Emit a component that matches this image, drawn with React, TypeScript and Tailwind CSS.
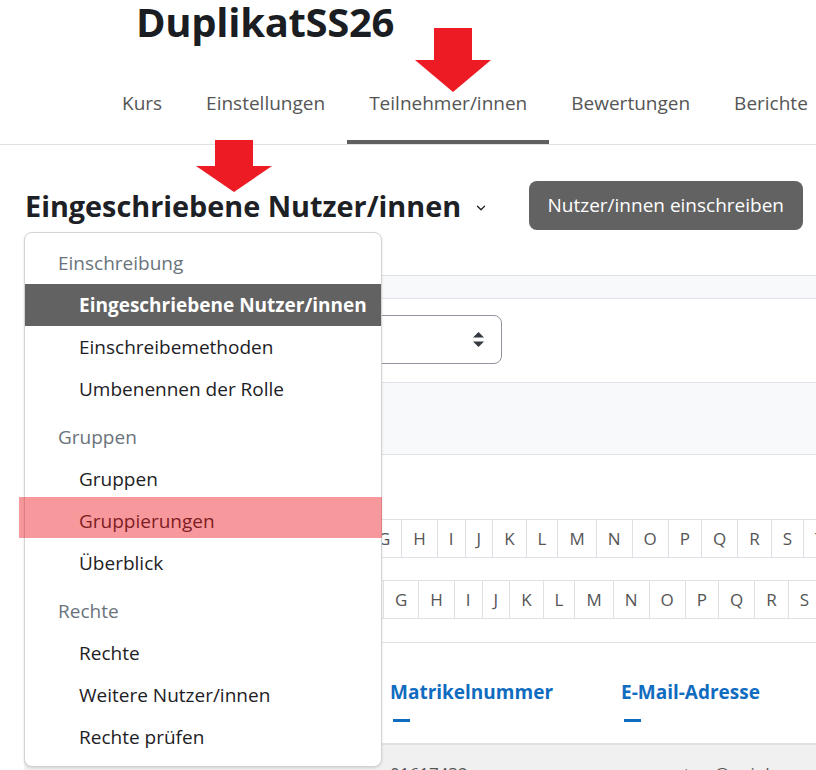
import { ChevronDown } from 'lucide-react'

const TABS = ['Kurs', 'Einstellungen', 'Teilnehmer/innen', 'Bewertungen', 'Berichte']
const LETTERS = 'ABCDEFGHIJKLMNOPQRSTUVWXYZ'.split('')

type MenuEntry = { kind: 'header' | 'item'; label: string; active?: boolean }

const MENU: MenuEntry[] = [
  { kind: 'header', label: 'Einschreibung' },
  { kind: 'item', label: 'Eingeschriebene Nutzer/innen', active: true },
  { kind: 'item', label: 'Einschreibemethoden' },
  { kind: 'item', label: 'Umbenennen der Rolle' },
  { kind: 'header', label: 'Gruppen' },
  { kind: 'item', label: 'Gruppen' },
  { kind: 'item', label: 'Gruppierungen' },
  { kind: 'item', label: 'Überblick' },
  { kind: 'header', label: 'Rechte' },
  { kind: 'item', label: 'Rechte' },
  { kind: 'item', label: 'Weitere Nutzer/innen' },
  { kind: 'item', label: 'Rechte prüfen' },
]

function InitialsBar({ offset }: { offset: string }) {
  return (
    <div className={`flex h-[39px] border-y border-[#dee2e6] ${offset}`}>
      {['Alle', ...LETTERS].map((l) => (
        <span
          key={l}
          className="shrink-0 flex items-center px-[11px] border-l border-[#dee2e6] text-[17px] text-[#555]"
        >
          {l}
        </span>
      ))}
    </div>
  )
}

function SortMark() {
  return <span className="block ml-[3px] mt-[13px] w-[17px] h-[3px] bg-[#0f6cbf]" />
}

export default function App() {
  return (
    <div className="relative w-[816px] h-[770px] overflow-hidden bg-white text-[#1d2125] font-['Open_Sans','Noto_Sans',sans-serif]">
      {/* course header */}
      <div className="h-[62px] pl-[136px]">
        <h1 className="text-[40px] leading-[44px] font-bold tracking-[-0.3px] text-[#1a1d21]">DuplikatSS26</h1>
      </div>
      <nav className="flex h-[83px] pl-[100px] border-b border-[#dee2e6]">
        {TABS.map((t) => (
          <span
            key={t}
            className={`shrink-0 flex items-center px-[22px] pt-[4px] text-[19px] text-[#555] whitespace-nowrap border-b-[4px] ${
              t === 'Teilnehmer/innen' ? 'border-[#5f5f5f]' : 'border-transparent'
            }`}
          >
            {t}
          </span>
        ))}
      </nav>

      {/* page heading */}
      <div className="flex items-center h-[49px] mt-[36px] pl-[25px] pr-[13px]">
        <h2 className="text-[28.8px] font-bold whitespace-nowrap">Eingeschriebene Nutzer/innen</h2>
        <ChevronDown size={14} strokeWidth={2.2} className="ml-[13px] mt-[4px]" />
        <button className="ml-auto h-[49px] px-[19px] rounded-[8px] bg-[#626262] text-white text-[19px] whitespace-nowrap">
          Nutzer/innen einschreiben
        </button>
      </div>

      {/* filters */}
      <div className="pl-6">
        <div className="mt-[45px] h-[24px] border-y border-[#dee2e6] bg-[#f8f9fa]" />
        <div className="mt-[16px] ml-[254px] w-[224px] h-[49px] flex items-center justify-end pr-[17px] border border-[#8f959e] rounded-[8px]">
          <svg width="11" height="15" viewBox="0 0 11 15" fill="#343a40">
            <polygon points="5.5,0 11,5.5 0,5.5" />
            <polygon points="0,9.5 11,9.5 5.5,15" />
          </svg>
        </div>
        <div className="mt-[18px] h-[73px] border-y border-[#dee2e6] bg-[#f8f9fa]" />

        <div className="mt-[64px]">
          <InitialsBar offset="ml-[89px]" />
        </div>
        <div className="mt-[22px]">
          <InitialsBar offset="ml-[106px]" />
        </div>

        {/* participants table */}
        <div className="mt-[23px] flex h-[103px] border-t border-b-2 border-[#dee2e6]">
          <div className="w-[358px] shrink-0" />
          <div className="w-[231px] shrink-0 px-2 pt-[35px]">
            <span className="block text-[19px] leading-[28px] font-bold text-[#0f6cbf]">Matrikelnummer</span>
            <SortMark />
          </div>
          <div className="px-2 pt-[35px]">
            <span className="block text-[19px] leading-[28px] font-bold text-[#0f6cbf]">E-Mail-Adresse</span>
            <SortMark />
          </div>
        </div>
        <div className="flex h-[40px] bg-[#f0f0f0] text-[17px] text-[#555]">
          <div className="w-[358px] shrink-0" />
          <div className="w-[231px] shrink-0 px-2 pt-[16px]">01617432</div>
          <div className="px-[50px] pt-[16px]">nutzer@uni.de</div>
        </div>
      </div>

      {/* dropdown menu */}
      <div className="absolute left-[24px] top-[232px] w-[358px] pt-[3px] pb-2 bg-white border border-[#d3d3d3] rounded-[8px] shadow-sm">
        {MENU.map((m, i) =>
          m.kind === 'header' ? (
            <div key={i} className="mt-[6px] h-[42px] flex items-center px-[33px] text-[19px] text-[#6a737b]">
              {m.label}
            </div>
          ) : (
            <div
              key={i}
              className={`h-[42px] flex items-center pl-[54px] text-[19px] whitespace-nowrap ${
                m.active ? 'bg-[#626262] text-white font-bold' : 'text-[#1d2125]'
              }`}
            >
              {m.label}
            </div>
          ),
        )}
      </div>

      {/* highlight + arrows */}
      <div className="absolute left-[19px] top-[497px] w-[363px] h-[41px] bg-[rgba(237,28,36,0.45)]" />
      <svg className="absolute inset-0 pointer-events-none" width="816" height="770" fill="#ed1c24">
        <polygon points="434,28 472,28 472,60 491,60 453,92 415,60 434,60" />
        <polygon points="215,140 253,140 253,166 272,166 234,192 196,166 215,166" />
      </svg>
    </div>
  )
}
